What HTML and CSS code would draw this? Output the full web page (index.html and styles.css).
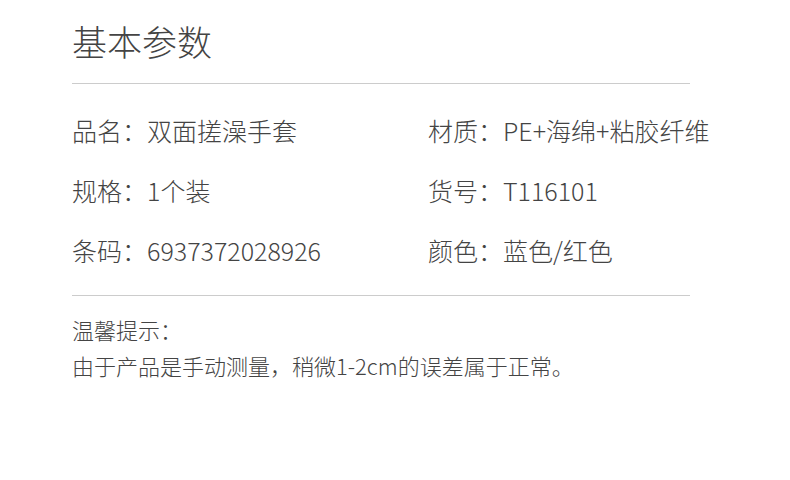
FILE: index.html
```html
<!DOCTYPE html>
<html lang="zh-CN">
<head>
    <meta charset="UTF-8">
    <title>基本参数</title>
    <link rel="stylesheet" href="styles.css">
</head>
<body>

<div class="params">
    <h1 class="title">基本参数</h1>

    <div class="grid">
        <div class="item">品名：双面搓澡手套</div>
        <div class="item">材质：PE+海绵+粘胶纤维</div>
        <div class="item">规格：1个装</div>
        <div class="item">货号：T116101</div>
        <div class="item">条码：6937372028926</div>
        <div class="item">颜色：蓝色/红色</div>
    </div>

    <div class="notice">
        <p>温馨提示：</p>
        <p>由于产品是手动测量，稍微1-2cm的误差属于正常。</p>
    </div>
</div>

</body>
</html>
```

FILE: styles.css
```css
body {
    margin: 0;
    background: #fff;
    color: #444;
    font-family: "Noto Sans CJK SC", "Noto Sans", sans-serif;
    font-weight: 300;
}
.params {
    width: 618px;
    margin-left: 72px;
    padding-top: 17px;
}
.title {
    margin: 0;
    font-size: 35px;
    font-weight: 300;
    line-height: 48px;
    padding-bottom: 18px;
    border-bottom: 1px solid #ccc;
}
.grid {
    display: grid;
    grid-template-columns: 356px 262px;
    row-gap: 24px;
    padding: 28px 0 27px;
    border-bottom: 1px solid #ccc;
}
.item {
    font-size: 25px;
    line-height: 36px;
    white-space: nowrap;
}
.notice {
    padding-top: 15px;
}
.notice p {
    margin: 0;
    font-size: 22px;
    line-height: 36px;
}
```
